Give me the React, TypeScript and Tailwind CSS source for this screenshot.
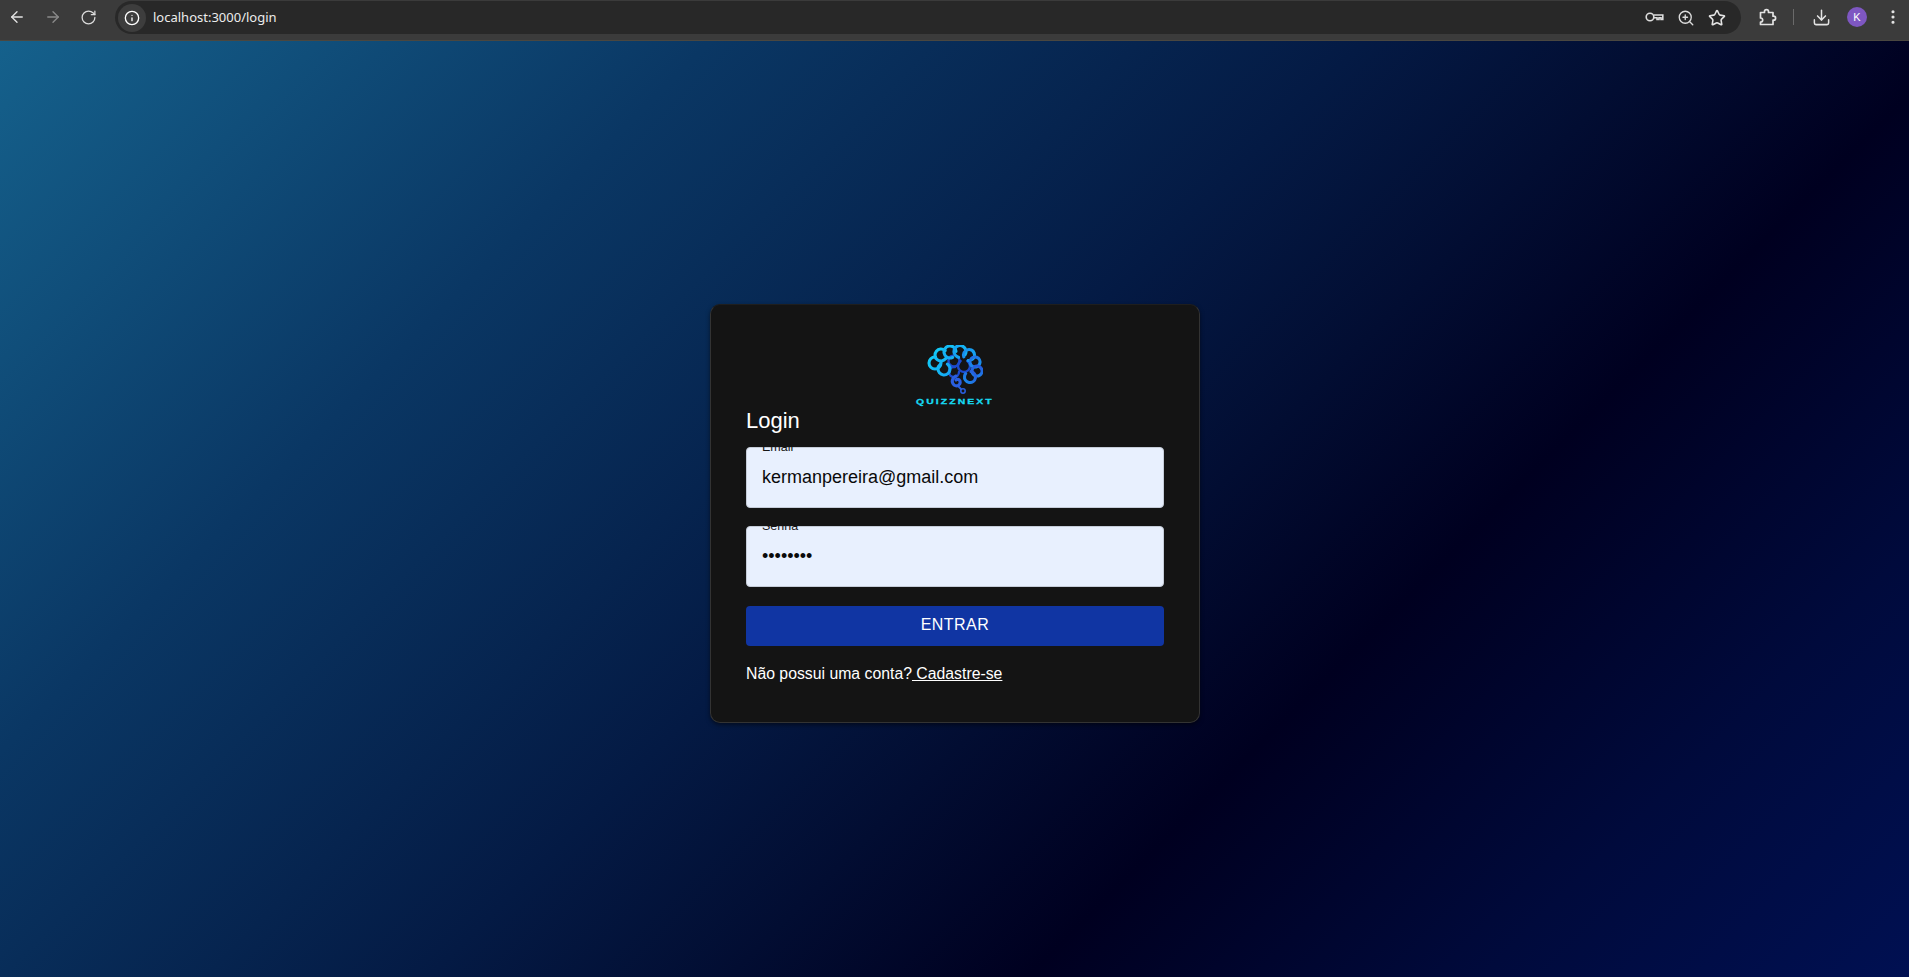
import { ArrowLeft, ArrowRight, Download, Info, MoreVertical, RotateCw, Star, ZoomIn } from 'lucide-react'

const lobes = [
  [8, 18, 6],
  [14, 10, 6],
  [23, 7, 6],
  [33, 6.5, 6],
  [42, 10, 5.5],
  [48, 17, 5],
  [50, 26, 5],
  [43, 32, 5.5],
  [17, 24, 6],
]

const innerLobes = [
  [27, 16, 5.5],
  [37, 21, 6],
  [27, 27, 5],
]

function KeyIcon() {
  return (
    <svg width="19" height="19" viewBox="0 0 19 19" fill="none" stroke="#dcdcdc" strokeWidth="1.6">
      <circle cx="5" cy="9" r="3.8" />
      <path d="M8.8 7h9v4.4h-1.8v-1.6h-2v1.6h-2v-1.6h-3.2" />
    </svg>
  )
}

function PuzzleIcon() {
  return (
    <svg width="20" height="20" viewBox="0 0 20 20" fill="none" stroke="#e3e3e3" strokeWidth="1.7" strokeLinejoin="round">
      <path d="M3.5 5.5H7.5V4.6a2 2 0 0 1 4 0v.9h4.5v3.7h.6a2 2 0 0 1 0 4H16v4.3H3.5v-2.3c1.4 0 2.2-.9 2.2-2.1s-.8-2.1-2.2-2.1z" />
    </svg>
  )
}

function BrainLogo() {
  return (
    <svg width="56" height="50" viewBox="0 0 56 50" fill="none" strokeWidth="3.1" strokeLinecap="round">
      <defs>
        <linearGradient id="brain" gradientUnits="userSpaceOnUse" x1="6" y1="6" x2="50" y2="40">
          <stop offset="0%" stopColor="#12cdf8" />
          <stop offset="60%" stopColor="#1698f0" />
          <stop offset="100%" stopColor="#2a50d8" />
        </linearGradient>
      </defs>
      {innerLobes.map(([cx, cy, r], i) => (
        <circle key={i} cx={cx} cy={cy} r={r} stroke="#1c49cc" strokeWidth="2.4" strokeDasharray="24 7" />
      ))}
      {lobes.map(([cx, cy, r], i) => (
        <circle key={i} cx={cx} cy={cy} r={r} stroke="url(#brain)" strokeDasharray="28 7" transform={`rotate(${i * 40} ${cx} ${cy})`} />
      ))}
      <path d="M29 31c-4 2-5 6-2 9 3 2 7 0 6-4-1-2-3-2-4-1" stroke="#2a5fe0" />
      <path d="M31 41l3 3" stroke="#2a5fe0" strokeWidth="1.8" />
      <circle cx="36" cy="46" r="2.2" stroke="#2a5fe0" strokeWidth="1.5" />
    </svg>
  )
}

function Field({ label, value, type }: { label: string; value: string; type: string }) {
  return (
    <div className="relative">
      <span className="absolute left-4 -top-[7px] text-[12.5px] leading-[14px] text-[#151515]">{label}</span>
      <input
        readOnly
        type={type}
        value={value}
        className="block w-full h-[61px] rounded-[4px] border border-[#c5ccd8] bg-[#e8f0fe] px-[15px] text-[18px] text-[#0a0a0a] outline-none"
      />
    </div>
  )
}

export default function App() {
  return (
    <div className="flex h-[977px] flex-col overflow-hidden bg-black font-['Liberation_Sans',sans-serif]">
      <div className="flex h-[41px] shrink-0 items-start border-b border-[#4a4740] bg-[#3b3b3b] text-[#e3e3e3]">
        <div className="flex h-[34px] w-[115px] items-center gap-[18px] pl-[8px]">
          <ArrowLeft size={18} strokeWidth={1.8} />
          <ArrowRight size={18} strokeWidth={1.8} className="text-[#8a8a8a]" />
          <RotateCw size={17} strokeWidth={1.8} className="text-[#dcdcdc]" />
        </div>
        <div className="mt-px flex h-[33px] w-[1626px] items-center rounded-full bg-[#282828] pl-[3px] pr-[15px]">
          <div className="flex h-[28px] w-[28px] items-center justify-center rounded-full bg-[#3d3d3d]">
            <Info size={16} strokeWidth={2} className="text-white" />
          </div>
          <span className="ml-[7px] font-['Noto_Sans',sans-serif] text-[13px] text-[#ececec]">localhost:3000/login</span>
          <div className="ml-auto flex items-center gap-[13px]">
            <KeyIcon />
            <ZoomIn size={18} strokeWidth={1.8} className="text-[#dcdcdc]" />
            <Star size={18} strokeWidth={2.1} className="text-[#e3e3e3]" />
          </div>
        </div>
        <div className="flex h-[34px] flex-1 items-center pl-[16px]">
          <PuzzleIcon />
          <div className="ml-[16px] h-[16px] w-px bg-[#6a6a6a]" />
          <Download size={19} strokeWidth={1.9} className="ml-[18px]" />
          <div className="ml-[16px] flex h-[20px] w-[20px] items-center justify-center rounded-full bg-[#7e57c2] text-[11px] text-white">K</div>
          <MoreVertical size={18} strokeWidth={2.2} className="ml-[17px]" />
        </div>
      </div>

      <main className="flex flex-1 items-center justify-center bg-[linear-gradient(135deg,#15618c_0%,#0a3764_25%,#041a44_48%,#000020_69%,#000a3c_85%,#001052_100%)] pt-[9px] pl-px">
        <div className="w-[490px] rounded-[10px] border border-[#333333] border-t-[#1e1e1e] bg-[#141414] px-[35px] pt-[40px] pb-[39px] shadow-[0_2px_4px_rgba(0,0,0,0.5)]">
          <div className="flex flex-col items-center">
            <BrainLogo />
            <span className="mt-[2px] scale-x-130 text-[8px] leading-[9px] font-bold tracking-[1.6px] text-[#16dcf4] [-webkit-text-stroke:0.3px_#16dcf4]">QUIZZNEXT</span>
          </div>
          <h1 className="mt-[2px] text-[22px] leading-[26px] text-white">Login</h1>
          <div className="mt-[13px] flex flex-col gap-[18px]">
            <Field label="Email *" value="kermanpereira@gmail.com" type="text" />
            <Field label="Senha *" value="12345678" type="password" />
          </div>
          <button className="mt-[19px] block h-[40px] w-full rounded-[4px] bg-[#1035a3] pb-[2px] text-[16px] tracking-[0.457px] text-white">ENTRAR</button>
          <p className="mt-[19px] text-[15.8px] leading-[18px] text-white">
            Não possui uma conta?<a className="underline"> Cadastre-se</a>
          </p>
        </div>
      </main>
    </div>
  )
}
